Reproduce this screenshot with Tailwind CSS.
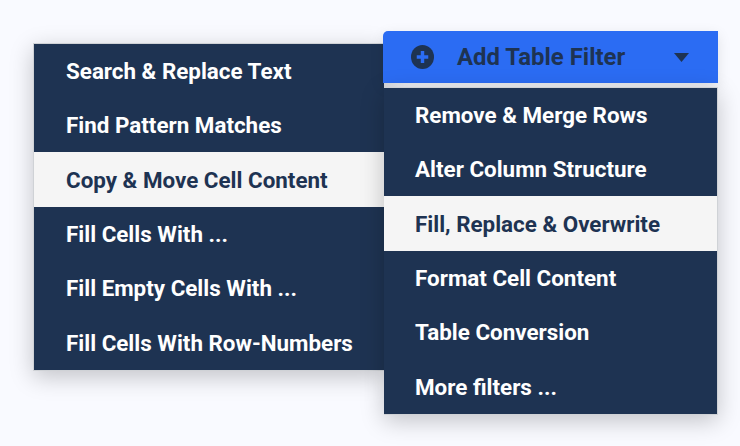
<!DOCTYPE html>
<html lang="en">
<head>
  <meta charset="UTF-8"/>
  <title>Add Table Filter</title>
  <script src="https://cdn.jsdelivr.net/npm/@tailwindcss/browser@4"></script>
</head>
<body class="bg-[#f9faff] font-['Roboto',sans-serif] font-bold text-[22.4px] text-white">
  <div class="w-[740px] h-[446px] overflow-hidden flex items-start pl-[33px] pt-[31px]">

    <!-- Left submenu -->
    <ul class="mt-[12px] w-[351px] h-[328px] flex flex-col bg-[#1e3352] border border-[#cfd2d6] border-r-0 shadow-[0_6px_22px_rgba(0,0,0,0.22)]">
      <li class="h-[54px] flex items-center pl-[32px] pt-[1px]">Search &amp; Replace Text</li>
      <li class="h-[54px] flex items-center pl-[32px] pt-[1px]">Find Pattern Matches</li>
      <li class="h-[55px] flex items-center pl-[32px] pt-[2px] bg-[#f5f5f5] text-[#1e3352]">Copy &amp; Move Cell Content</li>
      <li class="h-[54px] flex items-center pl-[32px] pt-[1px]">Fill Cells With ...</li>
      <li class="h-[54px] flex items-center pl-[32px] pt-[1px]">Fill Empty Cells With ...</li>
      <li class="h-[55px] flex items-center pl-[32px] pt-[2px]">Fill Cells With Row-Numbers</li>
    </ul>

    <div class="relative -ml-[1px] w-[335px] flex flex-col">
      <!-- Filter button -->
      <button class="h-[52px] w-full flex items-center bg-[#2b6cf3] rounded-tl-[5px] text-[#1e3352] text-[23.9px] shadow-[0_4px_14px_rgba(0,0,0,0.1)]">
        <svg class="ml-[28px] w-[23px] h-[24px]" viewBox="0 0 24 24" preserveAspectRatio="none">
          <circle cx="12" cy="12" r="12" fill="#1e3352"/>
          <path d="M12 6v12M6 12h12" stroke="#2b6cf3" stroke-width="3.6"/>
        </svg>
        <span class="ml-[23px] pt-[2px]">Add Table Filter</span>
        <svg class="ml-[49px] w-[15px] h-[9px]" viewBox="0 0 15 9">
          <path d="M0 0h15L7.5 9z" fill="#1e3352"/>
        </svg>
      </button>

      <!-- Right submenu -->
      <ul class="mt-[4px] ml-[1px] w-[334px] h-[328px] flex flex-col bg-[#1e3352] border border-[#cfd2d6] border-l-0 shadow-[0_6px_22px_rgba(0,0,0,0.22)]">
        <li class="h-[54px] flex items-center pl-[31px] pt-[1px]">Remove &amp; Merge Rows</li>
        <li class="h-[54px] flex items-center pl-[31px] pt-[1px]">Alter Column Structure</li>
        <li class="h-[55px] flex items-center pl-[31px] pt-[2px] bg-[#f5f5f5] text-[#1e3352]">Fill, Replace &amp; Overwrite</li>
        <li class="h-[54px] flex items-center pl-[31px] pt-[1px]">Format Cell Content</li>
        <li class="h-[54px] flex items-center pl-[31px] pt-[1px]">Table Conversion</li>
        <li class="h-[55px] flex items-center pl-[31px] pt-[2px]">More filters ...</li>
      </ul>
    </div>
  </div>
</body>
</html>
